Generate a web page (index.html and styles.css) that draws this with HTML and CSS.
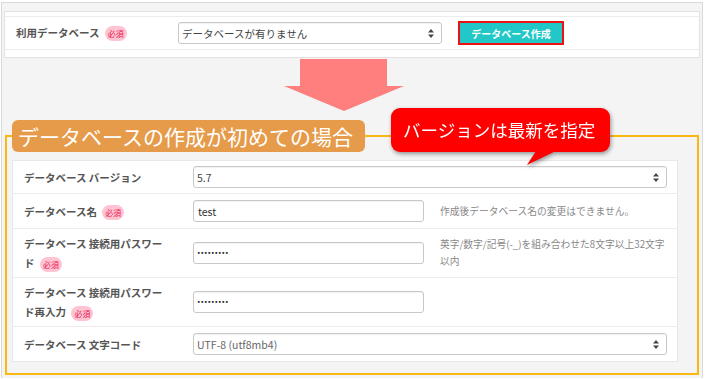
FILE: index.html
```html
<!DOCTYPE html>
<html lang="ja">
<head>
    <meta charset="UTF-8">
    <meta name="viewport" content="width=device-width, initial-scale=1.0">
    <title>データベース作成</title>
    <link rel="stylesheet" href="styles.css">
</head>
<body>
    <div class="page">
        <div class="db-panel">
            <div class="db-row">
                <div class="db-label">利用データベース <span class="req">必須</span></div>
                <div class="select-wrap db-select">
                    <select><option>データベースが有りません</option></select>
                    <svg class="updown" width="6" height="9" viewBox="0 0 6 9"><path d="M3 0L6 3.5H0Z M3 9L0 5.5H6Z" fill="#444"/></svg>
                </div>
                <button class="create-btn">データベース作成</button>
            </div>
        </div>

        <div class="arrow">
            <div class="arrow-shaft"></div>
            <div class="arrow-head"></div>
        </div>

        <fieldset class="first-box">
            <legend>データベースの作成が初めての場合</legend>
            <div class="form-panel">
                <div class="form-row">
                    <div class="form-label">データベース バージョン</div>
                    <div class="select-wrap wide">
                        <select><option>5.7</option></select>
                        <svg class="updown" width="6" height="9" viewBox="0 0 6 9"><path d="M3 0L6 3.5H0Z M3 9L0 5.5H6Z" fill="#444"/></svg>
                    </div>
                </div>
                <div class="form-row row-name">
                    <div class="form-label">データベース名 <span class="req">必須</span></div>
                    <input class="text-input" type="text" value="test">
                    <div class="help">作成後データベース名の変更はできません。</div>
                </div>
                <div class="form-row">
                    <div class="form-label">データベース 接続用パスワード <span class="req">必須</span></div>
                    <input class="text-input pass" type="text" value="•••••••••">
                    <div class="help">英字/数字/記号(-_)を組み合わせた8文字以上32文字以内</div>
                </div>
                <div class="form-row">
                    <div class="form-label">データベース 接続用パスワード再入力 <span class="req">必須</span></div>
                    <input class="text-input pass" type="text" value="•••••••••">
                </div>
                <div class="form-row last">
                    <div class="form-label">データベース 文字コード</div>
                    <div class="select-wrap wide">
                        <select class="muted"><option>UTF-8 (utf8mb4)</option></select>
                        <svg class="updown" width="6" height="9" viewBox="0 0 6 9"><path d="M3 0L6 3.5H0Z M3 9L0 5.5H6Z" fill="#444"/></svg>
                    </div>
                </div>
            </div>
        </fieldset>

        <div class="callout">バージョンは最新を指定</div>
    </div>
</body>
</html>
```

FILE: styles.css
```css
body {
    margin: 0;
    background: #fff;
    font-family: "Noto Sans CJK JP", "Noto Sans", sans-serif;
    color: #555;
}
.page {
    position: relative;
    margin: 2px 4px 0 1px;
    height: 376px;
    border: 1px solid #dadada;
    border-bottom: none;
    background: #f4f4f4;
    padding-top: 8px;
    box-sizing: border-box;
}
.db-panel {
    margin: 0 2px;
    background: #fff;
    border: 1px solid #e2e2e2;
    padding: 4px 0 7px;
}
.db-row {
    display: flex;
    align-items: center;
    height: 32px;
    border-top: 1px solid #ececec;
    border-bottom: 1px solid #ececec;
    padding-left: 11px;
}
.db-label {
    flex: none;
    width: 162px;
    font-size: 10.5px;
    font-weight: bold;
    color: #555;
}
.req {
    display: inline-block;
    background: #ffc4d4;
    color: #e8204e;
    font-size: 8px;
    font-weight: normal;
    line-height: 15px;
    padding: 0 3px;
    border-radius: 8px;
    margin-left: 3px;
    vertical-align: middle;
}
.select-wrap {
    position: relative;
    flex: none;
}
.select-wrap select {
    display: block;
    appearance: none;
    -webkit-appearance: none;
    width: 100%;
    height: 22px;
    margin: 0;
    border: 1px solid #c8c8c8;
    border-radius: 3px;
    background: #fff;
    font-family: inherit;
    font-size: 10.5px;
    color: #444;
    padding: 0 3px;
    box-shadow: inset 0 1px 1px rgba(0, 0, 0, 0.06);
}
.select-wrap select.muted {
    color: #666;
}
.updown {
    position: absolute;
    right: 8px;
    top: 7px;
}
.db-select {
    width: 264px;
}
.create-btn {
    flex: none;
    margin-left: 16px;
    width: 106px;
    height: 24px;
    background: #22c7c7;
    border: 2px solid #ee1111;
    color: #fff;
    font-family: inherit;
    font-size: 10px;
    font-weight: bold;
    padding: 0;
}
.arrow {
    display: flex;
    flex-direction: column;
    align-items: center;
    width: 121px;
    margin: 1px 0 0 281px;
}
.arrow-shaft {
    width: 87px;
    height: 27px;
    background: #ff7e7e;
}
.arrow-head {
    width: 0;
    height: 0;
    border-left: 60.5px solid transparent;
    border-right: 60.5px solid transparent;
    border-top: 25px solid #ff7e7e;
}
.first-box {
    margin: 9px 3px 0 3px;
    padding: 8px 19px 11px 5px;
    border: 2px solid #f9b912;
    min-width: 0;
}
.first-box legend {
    background: #e69b4a;
    color: #fff;
    font-size: 21px;
    line-height: 32px;
    padding: 0 12px 0 6px;
    border-radius: 6px;
    margin: 0;
}
.form-panel {
    background: #fff;
    border: 1px solid #e8e8e8;
}
.form-row {
    display: flex;
    align-items: center;
    min-height: 33px;
    padding: 5px 0;
    box-sizing: border-box;
    border-bottom: 1px solid #ececec;
}
.form-row.row-name {
    min-height: 35px;
}
.form-row.last {
    min-height: 34px;
    border-bottom: none;
}
.form-label {
    flex: none;
    width: 141px;
    margin: 0 28px 0 11px;
    font-size: 10.5px;
    font-weight: bold;
    line-height: 19px;
    color: #555;
}
.wide {
    width: 474px;
}
.text-input {
    flex: none;
    width: 231px;
    height: 22px;
    box-sizing: border-box;
    border: 1px solid #c8c8c8;
    border-radius: 3px;
    font-family: inherit;
    font-size: 10.5px;
    color: #333;
    padding: 0 4px;
    margin: 0;
    box-shadow: inset 0 1px 1px rgba(0, 0, 0, 0.06);
}
.text-input.pass {
    font-family: "DejaVu Sans", sans-serif;
    font-size: 5.5px;
    font-weight: bold;
    color: #222;
    padding-left: 3px;
}
.help {
    margin-left: 16px;
    width: 233px;
    font-size: 9.75px;
    line-height: 17px;
    color: #888;
}
.callout {
    position: absolute;
    left: 389px;
    top: 105px;
    width: 219px;
    height: 44px;
    box-sizing: border-box;
    padding-left: 12px;
    background: #ff0000;
    color: #fff;
    font-size: 17.5px;
    line-height: 44px;
    border-radius: 9px;
    filter: drop-shadow(1px 2px 2px rgba(0, 0, 0, 0.4));
}
.callout::after {
    content: "";
    position: absolute;
    left: 136px;
    top: 40px;
    width: 36px;
    height: 17px;
    background: #ff0000;
    clip-path: polygon(11px 0, 35px 0, 0 17px);
}
```
